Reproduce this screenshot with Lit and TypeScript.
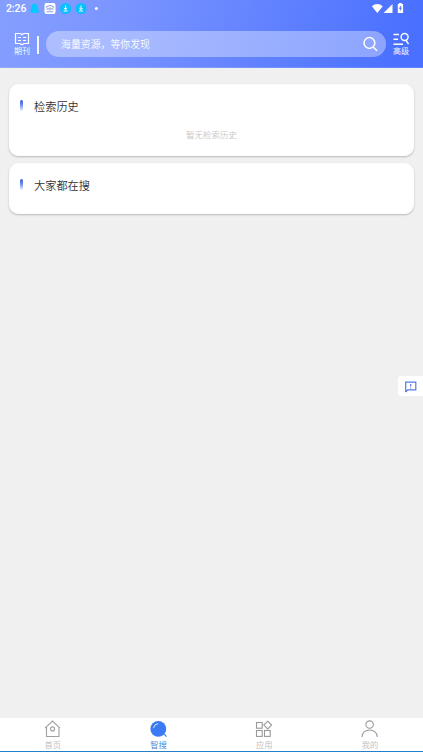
import { LitElement, html, css, svg } from "lit";
import { customElement } from "lit/decorators.js";

const tabs = [
  {
    label: "首页",
    active: false,
    icon: svg`<g fill="none" stroke="#a0a0a0" stroke-width="1.1"><path d="M1 8.2 8.5 1.1 16 8.2M2.5 7v9.5h12.5V7"/><circle cx="8.5" cy="8.9" r="2"/></g>`,
  },
  {
    label: "智搜",
    active: true,
    icon: svg`<circle cx="8.3" cy="8.9" r="7.9" fill="#3a7af5"/><path d="m14.2 14.2 2.3 2.5" stroke="#3a7af5" stroke-width="1.2"/><path d="M3.5 8.2A5.3 5.3 0 0 1 8.2 3.6" fill="none" stroke="#fff" stroke-opacity=".8"/>`,
  },
  {
    label: "应用",
    active: false,
    icon: svg`<g fill="none" stroke="#999" stroke-width="1.1"><rect x="1.5" y="2.5" width="5.7" height="5.7"/><rect x="1.5" y="10.5" width="5.7" height="5.9"/><rect x="9.5" y="10.5" width="5.7" height="5.9"/><path d="m12.7 1.2 3.9 3.9-3.9 3.9-3.9-3.9z"/></g>`,
  },
  {
    label: "我的",
    active: false,
    icon: svg`<g fill="none" stroke="#9b9b9b" stroke-width="1.1"><circle cx="8.6" cy="4.6" r="3.7"/><path d="M.9 17c.1-4.1 3.4-7 7.7-7s7.6 2.9 7.7 7"/></g>`,
  },
];

@customElement("app-root")
export class AppRoot extends LitElement {
  static styles = css`
    :host {
      display: flex;
      flex-direction: column;
      position: relative;
      width: 100%;
      height: 100vh;
      overflow: hidden;
      background: #f0f0f0;
      font-family: Roboto, "Noto Sans CJK SC", sans-serif;
      font-weight: 350;
    }
    * { box-sizing: border-box; }
    svg { display: block; flex: none; }
    header {
      height: 68px;
      flex: none;
      color: #fff;
      background: linear-gradient(110deg, #859fff 0%, #7994ff 30%, #4a70ff 94%);
      border-bottom: 1px solid rgba(255, 255, 255, 0.12);
    }
    .status {
      height: 17px;
      padding: 0 19px 0 6px;
      display: flex;
      align-items: center;
    }
    .time { width: 23px; font-size: 10.5px; line-height: 17px; letter-spacing: -0.1px; font-weight: 500; }
    .notices { margin-right: auto; }
    .bar { height: 50px; display: flex; align-items: center; padding: 4px 12px 0; }
    .shortcut {
      width: 20px;
      height: 24px;
      display: flex;
      flex-direction: column;
      align-items: center;
      font-size: 8px;
      line-height: 10px;
      white-space: nowrap;
    }
    .shortcut span { margin-top: 1px; }
    .divider { width: 2px; height: 18px; margin: 2px 6px 0 5px; background: #fff; opacity: 0.9; }
    .search {
      flex: 1;
      height: 26px;
      margin: 0 5px 0 1px;
      padding: 0 8px 0 15px;
      display: flex;
      align-items: center;
      justify-content: space-between;
      border-radius: 13px;
      background: rgba(255, 255, 255, 0.36);
      font-size: 9.9px;
    }
    main { flex: 1; padding: 16px 9px 0; }
    .card {
      height: 72px;
      margin: 0 0 7px;
      padding: 12px 10px;
      border-radius: 9px;
      background: #fff;
      border: 1px solid #fdfdfd;
      box-shadow: 0 1px 2px rgba(0, 0, 0, 0.23);
    }
    .short { height: 51px; }
    .title { display: flex; align-items: center; height: 18px; color: #333; font-size: 11.2px; }
    .mark {
      width: 3px;
      height: 11px;
      margin: 0 11px 1px 0;
      border-radius: 2px 2px 0 0;
      background: linear-gradient(#3659d8, #7a95ee 50%, #f2f5ff);
    }
    .empty { margin: 13px 0 0; text-align: center; color: #c8c8c8; font-size: 8.5px; line-height: 14px; }
    .feedback {
      position: absolute;
      right: 0;
      top: 376px;
      width: 25px;
      height: 20px;
      padding: 5px 0 0 7px;
      border-radius: 3px 0 0 3px;
      background: #fff;
    }
    nav {
      height: 34px;
      flex: none;
      display: flex;
      background: #fff;
      border-bottom: 1px solid #2580c8;
    }
    .tab {
      flex: 1;
      padding-top: 2px;
      display: flex;
      flex-direction: column;
      align-items: center;
      color: #bdbdbd;
      font-size: 8.3px;
      line-height: 14px;
    }
    .active { color: #3b7fd4; }
  `;

  private card(title: string, short: boolean, message = "") {
    return html`<section class="card ${short ? "short" : ""}">
      <div class="title"><span class="mark"></span>${title}</div>
      ${message ? html`<p class="empty">${message}</p>` : ""}
    </section>`;
  }

  render() {
    return html`
      <header>
        <div class="status">
          <span class="time">2:26</span>
          <svg class="notices" width="71" height="17" viewBox="29 0 71 17">
            <path d="M31 13c-1.5-2 .3-4 .6-5.4.2-2.5 1.2-4.1 3-4.1s2.8 1.6 3 4.1c.3 1.4 2.1 3.4.6 5.4z" fill="#06c8ff"/>
            <rect x="44.5" y="3" width="11" height="11" rx="2" fill="#fff"/>
            <path d="M46 7.5q4-4 8 0M46.5 9.5q3.5-3 7 0M46.5 11.8h7M48.5 9.8h3" stroke="#8fa1e2" fill="none" stroke-width="1.1"/>
            <circle cx="65.6" cy="8.5" r="5.5" fill="#08bfff"/><circle cx="81" cy="8.5" r="5.5" fill="#08bfff"/>
            <path d="M65.6 5.5v4M63.9 8l1.7 1.7L67.3 8M63.6 11h4M81 5.5v4M79.3 8l1.7 1.7L82.7 8M79 11h4" fill="none" stroke="#fff"/>
            <circle cx="96.3" cy="8.5" r="1.5" fill="#fff"/>
          </svg>
          <svg width="33" height="17" viewBox="371 0 33 17" fill="#fff">
            <path d="M371.8 6.2q5.5-4.3 11 0l-5.5 6.8zM383.5 13l9-9v9zM399 3h2.8v1h1.3v9h-5.3V4h1.2z"/>
            <path d="M400.4 6v4.5M398.9 8.2h3" stroke="#5376f6" stroke-width="1"/>
          </svg>
        </div>
        <div class="bar">
          <div class="shortcut">
            <svg width="16" height="14" viewBox="0 0 16 14" fill="none" stroke="#fff" stroke-width="1.2">
              <path d="M1.5 1.5h4Q7.2 1.5 8 2.7 8.8 1.5 10.5 1.5h4v10H10L8 12.8 6 11.5H1.5zM4 5.5h3M9 5.5h3M4 8.5h3M9 8.5h3"/>
            </svg>
            <span>期刊</span>
          </div>
          <span class="divider"></span>
          <div class="search">
            <span>海量资源，等你发现</span>
            <svg width="15" height="16" viewBox="0 0 15 16" fill="none" stroke="#fff" stroke-width="1.5">
              <circle cx="6.4" cy="7" r="5.4"/><path d="m10.2 11 3.8 3.7"/>
            </svg>
          </div>
          <div class="shortcut">
            <svg width="18" height="14" viewBox="0 0 18 14" fill="none" stroke="#fff" stroke-width="1.4">
              <path d="M1.5 2.5H7M1.5 7.3H6M1.5 12.2h9.5M14.2 8.5l2.3 3.6"/><circle cx="12.6" cy="5" r="3.5"/>
            </svg>
            <span>高级</span>
          </div>
        </div>
      </header>
      <main>${this.card("检索历史", false, "暂无检索历史")}${this.card("大家都在搜", true)}</main>
      <div class="feedback">
        <svg width="12" height="12" viewBox="0 0 12 12" fill="none" stroke="#5478e8" stroke-width="1.2">
          <path d="M.7 11V1.2h10.1v7.7H2.7L.7 11M5.7 3v2.6M5.7 6.4v1.2"/>
        </svg>
      </div>
      <nav>
        ${tabs.map((t) => html`<div class="tab ${t.active ? "active" : ""}">
          <svg width="18" height="18" viewBox="0 0 18 18">${t.icon}</svg><span>${t.label}</span>
        </div>`)}
      </nav>
    `;
  }
}
